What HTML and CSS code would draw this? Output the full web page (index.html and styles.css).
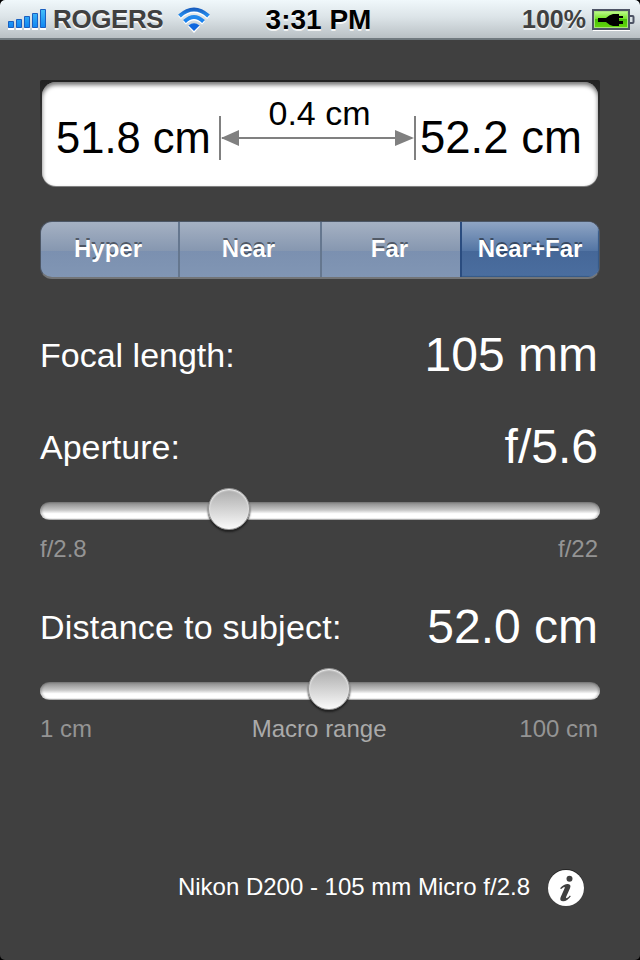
FILE: index.html
```html
<!DOCTYPE html>
<html lang="en">
<head>
<meta charset="utf-8">
<title>Depth of field</title>
<link rel="stylesheet" href="styles.css">
</head>
<body>
<header class="status">
  <div class="carrier">
    <svg class="signal" width="40" height="22" viewBox="0 0 40 22">
      <defs><linearGradient id="blue" x1="0" y1="0" x2="0" y2="22" gradientUnits="userSpaceOnUse"><stop offset="0" stop-color="#48c4fb"/><stop offset="1" stop-color="#087df0"/></linearGradient></defs>
      <path d="M0 21h6M8 21h6M16 21h6M24 21h6M32 21h6" stroke="#fff" stroke-width="2"/>
      <g fill="url(#blue)" stroke="#1a5fc0"><path d="M.5 13.500h5v6h-5zM8.500 11.500h5v8h-5zM16.500 8.500h5v11h-5zM24.500 5.500h5v14h-5zM32.500 1.500h5v18h-5z"/></g>
    </svg>
    <span class="name">ROGERS</span>
    <svg class="wifi" width="34" height="26" viewBox="0 0 34 26">
      <defs><linearGradient id="wave" x1="0" y1="0" x2="0" y2="24" gradientUnits="userSpaceOnUse"><stop offset="0" stop-color="#1554b6"/><stop offset=".35" stop-color="#258cec"/><stop offset="1" stop-color="#0870ef"/></linearGradient></defs>
      <g fill="none" stroke="#fff" stroke-width="4" transform="translate(0 1.500)"><path d="M2.500 9Q17-4 31.500 9M7.500 14.500Q17 5.500 26.500 14.500"/></g>
      <g fill="none" stroke="url(#wave)" stroke-width="4"><path d="M2.500 9Q17-4 31.500 9M7.500 14.500Q17 5.500 26.500 14.500"/></g>
      <path d="M11 19.500Q17 14.500 23 19.500L17 26z" fill="#fff"/>
      <path d="M11.500 18.500Q17 14 22.500 18.500L17 24z" fill="#1068df"/>
    </svg>
  </div>
  <div class="time">3:31 PM</div>
  <div class="power">
    <span>100%</span>
    <svg width="43" height="22" viewBox="0 0 43 22">
      <defs><linearGradient id="green" x1="0" y1="0" x2="0" y2="1"><stop offset="0" stop-color="#b9f985"/><stop offset=".45" stop-color="#74e526"/><stop offset=".5" stop-color="#46bd08"/><stop offset="1" stop-color="#62d50b"/></linearGradient></defs>
      <path d="M1 21.500h37" stroke="#fff"/>
      <rect x="1" y="1" width="36" height="19" fill="#a6e47a" stroke="#4d5365" stroke-width="2"/>
      <rect x="3" y="3" width="32" height="15" fill="url(#green)"/>
      <path d="M38 7h2.500q1 0 1 1v5q0 1-1 1H38" fill="#dbe3e6" stroke="#4d5365" stroke-width="2"/>
      <path d="M6 9h8q3-3 7-4h6v2h4v2h-4v3h4v3h-4v2h-6q-4-1-7-4H6z" fill="#000"/>
    </svg>
  </div>
</header>

<main>
  <section class="well">
    <div class="result">
      <span class="near">51.8 cm</span>
      <div class="span">
        <span>0.4 cm</span>
        <svg width="198" height="44" viewBox="0 0 198 44"><path d="M1 0v44M196 0v44M3 22h190" stroke="#808080" stroke-width="2" fill="none"/><path d="M2 22l18-8v16zM195 22l-19-8v16z" fill="#808080"/></svg>
      </div>
      <span class="far">52.2 cm</span>
    </div>
  </section>

  <nav class="segments">
    <div>Hyper</div><div>Near</div><div>Far</div><div class="active">Near+Far</div>
  </nav>

  <div class="row focal"><span>Focal length:</span><strong>105 mm</strong></div>
  <div class="row aperture"><span>Aperture:</span><strong>f/5.6</strong></div>
  <div class="track"><i class="knob knob-aperture"></i></div>
  <div class="scale"><span>f/2.8</span><span>f/22</span></div>
  <div class="row distance"><span>Distance to subject:</span><strong>52.0 cm</strong></div>
  <div class="track"><i class="knob knob-distance"></i></div>
  <div class="scale"><span>1 cm</span><span class="middle">Macro range</span><span>100 cm</span></div>
</main>

<footer>
  <span>Nikon D200 - 105 mm Micro f/2.8</span>
  <svg width="38" height="38" viewBox="0 0 38 38"><circle cx="18" cy="18" r="18" fill="#252525"/><circle cx="18" cy="19" r="18" fill="#fff"/><circle cx="21.500" cy="9.800" r="3" fill="#404040"/><path d="M12 19.200q4.500-4.500 8-4.200 3.500.5 2 4.300l-3.800 8.500q-.6 1.900.7 1.300 1.300-.5 3-2.600l.9.700q-3.600 5-7.600 5-4-.1-2.600-4l3.900-8.700q.7-1.700-.4-1.400-1 .3-2.900 2z" fill="#404040"/></svg>
</footer>
</body>
</html>
```
FILE: styles.css
```css
* { box-sizing: border-box; }
html { background: #000; }
body {
  margin: 0;
  width: 640px;
  height: 960px;
  overflow: hidden;
  background: #404040;
  border-radius: 5px;
  color: #fff;
  font-family: "Liberation Sans", Arial, sans-serif;
  display: flex;
  flex-direction: column;
  white-space: nowrap;
}
svg { display: block; flex: none; }
.status {
  height: 40px;
  flex: none;
  display: grid;
  grid-template-columns: 220px 1fr 220px;
  background: linear-gradient(#f0f8fb, #dce4e8 45%, #b9c0c4);
  border-bottom: 2px solid #717a7f;
  color: #404040;
  font-weight: bold;
  font-size: 26px;
  line-height: 39px;
  text-shadow: 0 2px 0 rgba(255, 255, 255, .8);
  border-radius: 5px 5px 0 0;
}
.carrier { display: flex; padding-left: 8px; }
.signal { margin-top: 8px; }
.name { width: 114px; padding-left: 5px; letter-spacing: -.4px; }
.wifi { margin: 7px 0 0 15px; }
.time { text-align: center; font-size: 28px; color: #000; padding-right: 3px; line-height: 40px; }
.power { display: flex; justify-content: flex-end; padding-right: 5px; font-size: 25px; }
.power svg { margin: 9px 0 0 6px; }

main { padding: 40px 40px 0; display: flex; flex-direction: column; }
.well { height: 107px; padding: 2px; background: linear-gradient(#222, #404040 60px); border-radius: 2px; }
.result {
  height: 104px;
  border-radius: 14px;
  background: #fff;
  box-shadow: inset 0 3px 4px rgba(0, 0, 0, .55), 0 1px 0 #808080;
  color: #000;
  display: flex;
}
.near { width: 177px; padding-left: 14px; font-size: 43.500px; line-height: 112px; }
.far { font-size: 45.500px; line-height: 111px; padding-left: 3px; }
.span { width: 198px; height: 104px; text-align: center; font-size: 34px; line-height: 38px; padding-top: 12px; }
.span > span { display: block; height: 22px; padding-left: 3px; position: relative; z-index: 1; }
.segments {
  margin-top: 34px;
  height: 58px;
  display: grid;
  grid-template-columns: 137px 142px 140px 139px;
  border-radius: 12px;
  overflow: hidden;
  background: linear-gradient(#a5b1c3, #8697b0 29px, #7b90b0 29px, #8196b4);
  border: 1px solid #4c5665;
  border-bottom: 2px solid #737577;
  font-size: 24px;
  font-weight: bold;
  line-height: 54px;
  text-align: center;
  text-shadow: 0 -2px 0 rgba(0, 0, 0, .45);
}
.segments div { padding-right: 3px; }
.segments div + div { border-left: 2px solid #65778f; }
.segments .active {
  padding-right: 1px;
  border-color: #2a4c7f;
  background: linear-gradient(#8fa5c4, #5375a4 29px, #456798 29px, #4b6e9f);
  box-shadow: inset -1px -1px 1px #365987;
}
.row { height: 48px; padding-right: 2px; display: flex; justify-content: space-between; align-items: center; font-size: 34px; line-height: 48px; }
.row strong { font-size: 48px; font-weight: normal; }
.focal { margin-top: 52px; }
.aperture { margin-top: 44px; }
.distance { margin-top: 39px; }
.distance span { letter-spacing: .25px; }
.track {
  height: 18px;
  margin-top: 31px;
  border-radius: 9px;
  position: relative;
  background: linear-gradient(#858585, #c8c8c8 45%, #fff 65%, #fff 90%, #aaa);
  box-shadow: inset 2px 0 2px rgba(0, 0, 0, .2), inset -2px 0 2px rgba(0, 0, 0, .2);
}
.knob {
  position: absolute;
  width: 42px;
  height: 42px;
  top: -14px;
  border-radius: 50%;
  border: 1px solid #969696;
  background: linear-gradient(#ababab, #fafafa);
  box-shadow: inset 0 1px 2px #fff, 0 2px 2px #202020;
}
.knob-aperture { left: 168px; }
.knob-distance { left: 268px; }
.scale { height: 30px; margin-top: 14px; padding-right: 2px; line-height: 30px; font-size: 24px; color: #949494; display: flex; justify-content: space-between; }
.middle { color: #aaa; padding-left: 27px; }
footer { display: flex; justify-content: flex-end; height: 38px; padding-right: 54px; margin-top: 125px; font-size: 24px; line-height: 36px; gap: 18px; }
```
